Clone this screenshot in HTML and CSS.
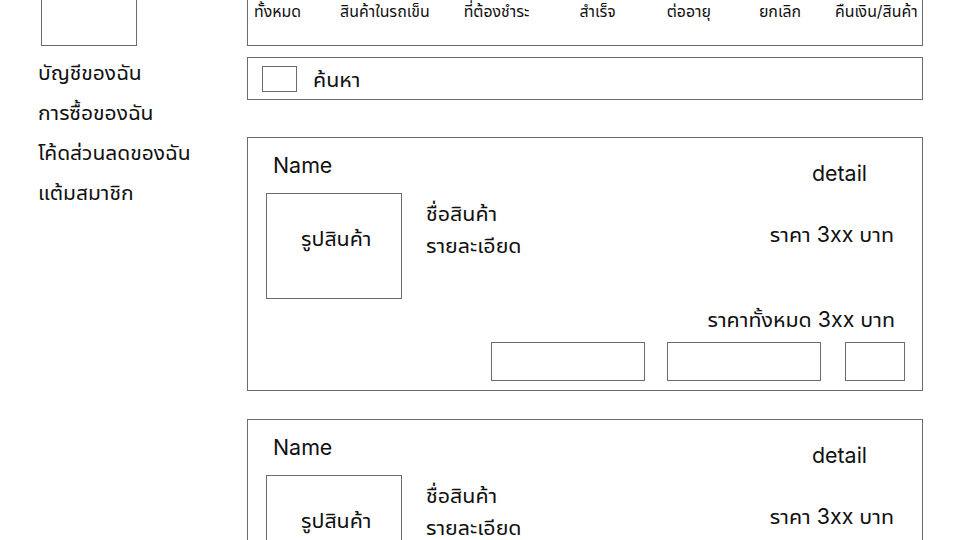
FILE: index.html
```html
<!DOCTYPE html>
<html lang="th">
<head>
<meta charset="utf-8">
<title>การซื้อของฉัน</title>
<link rel="stylesheet" href="styles.css">
</head>
<body>
<div class="page">
  <aside class="sidebar">
    <div class="avatar"></div>
    <nav class="side-nav">
      <a class="side-link">บัญชีของฉัน</a>
      <a class="side-link">การซื้อของฉัน</a>
      <a class="side-link">โค้ดส่วนลดของฉัน</a>
      <a class="side-link">แต้มสมาชิก</a>
    </nav>
  </aside>
  <main class="content">
    <div class="tabs">
      <span class="tab">ทั้งหมด</span>
      <span class="tab">สินค้าในรถเข็น</span>
      <span class="tab">ที่ต้องชำระ</span>
      <span class="tab">สำเร็จ</span>
      <span class="tab">ต่ออายุ</span>
      <span class="tab">ยกเลิก</span>
      <span class="tab">คืนเงิน/สินค้า</span>
    </div>
    <div class="search">
      <div class="search-icon"></div>
      <span class="search-text">ค้นหา</span>
    </div>
    <section class="card">
      <div class="card-head">
        <span class="name">Name</span>
        <span class="detail">detail</span>
      </div>
      <div class="card-body">
        <div class="photo">รูปสินค้า</div>
        <div class="info">
          <div>ชื่อสินค้า</div>
          <div>รายละเอียด</div>
        </div>
        <div class="price">ราคา 3xx บาท</div>
      </div>
      <div class="total">ราคาทั้งหมด 3xx บาท</div>
      <div class="actions">
        <div class="btn wide"></div>
        <div class="btn wide"></div>
        <div class="btn small"></div>
      </div>
    </section>
    <section class="card">
      <div class="card-head">
        <span class="name">Name</span>
        <span class="detail">detail</span>
      </div>
      <div class="card-body">
        <div class="photo">รูปสินค้า</div>
        <div class="info">
          <div>ชื่อสินค้า</div>
          <div>รายละเอียด</div>
        </div>
        <div class="price">ราคา 3xx บาท</div>
      </div>
      <div class="total">ราคาทั้งหมด 3xx บาท</div>
      <div class="actions">
        <div class="btn wide"></div>
        <div class="btn wide"></div>
        <div class="btn small"></div>
      </div>
    </section>
  </main>
</div>
</body>
</html>
```
FILE: styles.css
```css
* { box-sizing: border-box; }
html, body { margin: 0; padding: 0; background: #fff; }
body {
  font-family: Inter, "Noto Sans Thai UI", "Noto Sans Thai", "Noto Sans", sans-serif;
  color: #111;
  overflow: hidden;
  height: 540px;
}
.page {
  display: flex;
  margin-top: -20px;
}
.sidebar {
  width: 247px;
  flex: none;
}
.avatar {
  width: 96px;
  height: 66px;
  margin-left: 41px;
  border: 1px solid #6b6b6b;
}
.side-nav {
  display: flex;
  flex-direction: column;
  padding-left: 38px;
  margin-top: 7px;
}
.side-link {
  font-size: 21px;
  line-height: 40px;
}
.content {
  width: 676px;
  flex: none;
}
.tabs {
  height: 66px;
  border: 1px solid #6b6b6b;
  display: flex;
  padding: 21px 0 0 6px;
  font-size: 15.9px;
  line-height: 20px;
  white-space: nowrap;
}
.tab:nth-child(2) { margin-left: 39px; }
.tab:nth-child(3) { margin-left: 34px; }
.tab:nth-child(4) { margin-left: 50px; }
.tab:nth-child(5) { margin-left: 51px; }
.tab:nth-child(6) { margin-left: 48px; }
.tab:nth-child(7) { margin-left: 34px; }
.search {
  margin-top: 11px;
  height: 43px;
  border: 1px solid #6b6b6b;
  display: flex;
  align-items: center;
  padding-left: 14px;
}
.search-icon {
  width: 35px;
  height: 26px;
  border: 1px solid #6b6b6b;
}
.search-text {
  margin-left: 16px;
  font-size: 21.4px;
}
.card {
  margin-top: 37px;
  height: 254px;
  border: 1px solid #6b6b6b;
  padding: 15px 17px 9px 18px;
  font-size: 21.4px;
  line-height: 24px;
}
.card + .card { margin-top: 28px; }
.card-head {
  display: flex;
  justify-content: space-between;
  height: 40px;
}
.name { margin-left: 7px; }
.detail { margin-top: 8px; margin-right: 38px; }
.card-body {
  display: flex;
  height: 106px;
}
.photo {
  width: 136px;
  height: 106px;
  border: 1px solid #6b6b6b;
  padding: 32px 0 0 34px;
  white-space: nowrap;
}
.info {
  margin-left: 24px;
  padding-top: 4px;
  line-height: 32px;
}
.price {
  flex: 1;
  text-align: right;
  margin-top: 29px;
  margin-right: 11px;
}
.total {
  margin-top: 8px;
  text-align: right;
  margin-right: 10px;
}
.actions {
  margin-top: 11px;
  display: flex;
  justify-content: flex-end;
}
.btn {
  height: 39px;
  border: 1px solid #6b6b6b;
}
.btn.wide { width: 154px; margin-right: 22px; }
.btn.wide + .btn.wide { margin-right: 24px; }
.btn.small { width: 60px; }
```
